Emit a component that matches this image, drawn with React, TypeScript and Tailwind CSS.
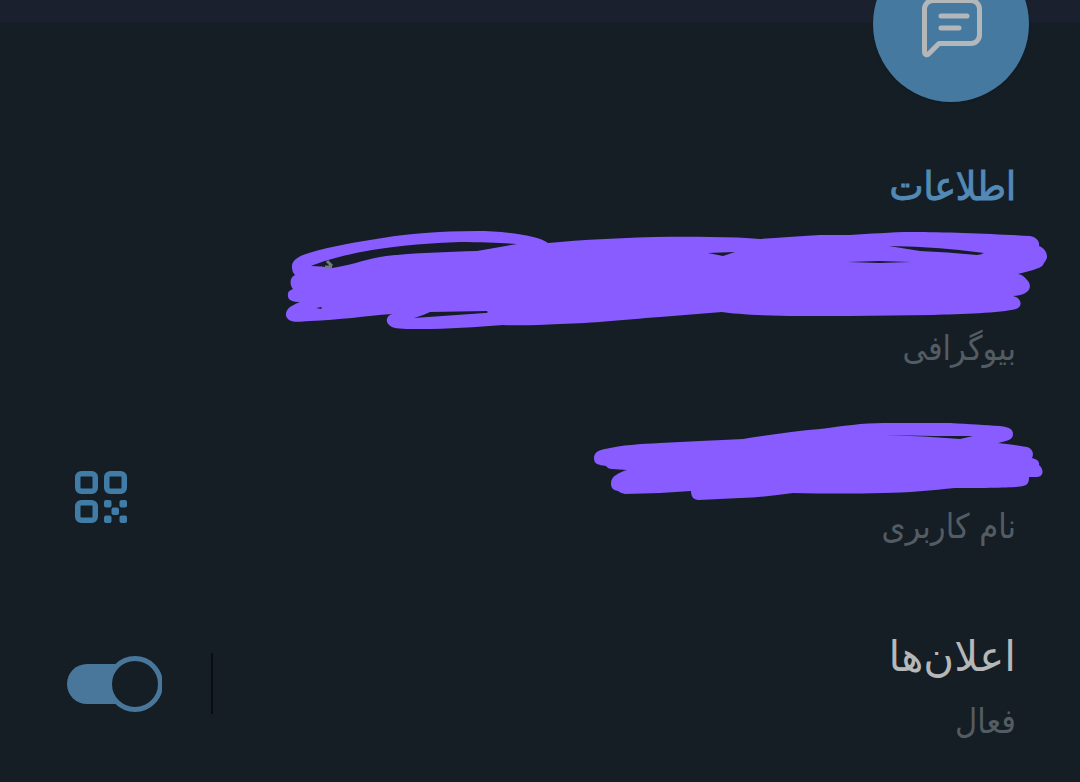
import { useState } from "react";

function MessageIcon() {
  return (
    <svg viewBox="0 0 72 72" className="size-[72px]" fill="none" stroke="#b3b7ba" strokeWidth="5" strokeLinecap="round" strokeLinejoin="round" aria-hidden="true">
      <path d="M9.500 21a8.500 8.500 0 0 1 8.500-8.500h38a8.500 8.500 0 0 1 8.500 8.500v26a8.500 8.500 0 0 1-8.500 8.500H24L13.500 66c-2 1.500-4 .5-4-2Z" />
      <path d="M26 28h26M26 40h18" />
    </svg>
  );
}

function QrIcon() {
  return (
    <svg viewBox="0 0 52 52" className="size-[52px]" fill="none" stroke="#407ca6" strokeWidth="5.500" aria-hidden="true">
      <rect x="2.750" y="2.750" width="17.500" height="17.500" rx="3.500" />
      <rect x="31.750" y="2.750" width="17.500" height="17.500" rx="3.500" />
      <rect x="2.750" y="31.750" width="17.500" height="17.500" rx="3.500" />
      <g fill="#407ca6" stroke="none">
        <rect x="29" y="29" width="7.500" height="7.500" rx="2" />
        <rect x="44.500" y="29" width="7.500" height="7.500" rx="2" />
        <rect x="36.500" y="36.500" width="7.500" height="7.500" rx="2" />
        <rect x="29" y="44.500" width="7.500" height="7.500" rx="2" />
        <rect x="44.500" y="44.500" width="7.500" height="7.500" rx="2" />
      </g>
    </svg>
  );
}

function BioScribble() {
  return (
    <svg viewBox="284 227 764 104" className="h-[104px] w-[764px] max-w-full" aria-hidden="true">
      <path
        fill="#885cff"
        d="M292 267C291 261 296 257 303 254C323 247 345 243 370 239C402 233 440 230 477 230C502 230 538 234 548 242L560 241C605 237 665 235 710 236Q740 236 760 238Q785 236 820 234L850 234C870 233 890 231 913 231C945 231 995 233 1030 235C1036 236 1040 240 1039 245C1044 247 1047 251 1047 256C1047 259 1044 261 1043 264C1040 268 1028 270 1018 273C1024 274 1026 278 1028 280C1033 287 1028 294 1013 295C1022 297 1023 306 1016 308C1001 312 960 313 933 314L850 315L800 315C765 315 735 313 722 311L660 316C620 319 595 322 560 323Q525 325 503 324C475 326 449 328 420 328C407 328 397 328 392 326C384 322 386 315 392 313C365 315 340 319 310 320C295 321 289 322 286 315C285 307 293 304 300 301C292 301 287 299 288 293C288 290 291 289 293 288C289 283 290 276 295 274Q292 271 292 267Z"
      />
      <g fill="#171c29">
        <path d="M311 265C325 259 353 252 372 249C405 244 430 242 460 241C484 241 502 242 517 243L477 250C445 251 405 252 380 256C363 259 348 265 332 267Q322 265 311 265Z" />
        <path d="M414 317Q424 314 430 311L487 310Q489 312 485 312Z" />
        <path d="M708 252L735 251L723 255Z" />
        <path d="M889 245Q943 246 984 252Q980 254 977 254Q947 251 920 250Z" />
        <path d="M848 261L879 260L911 261L879 262Z" />
        <path d="M316 307L322 306L321 308Z" />
      </g>
      <path d="M327 260L332 265M325 266H332" stroke="#707a80" strokeWidth="3" fill="none" />
    </svg>
  );
}

function UsernameScribble() {
  return (
    <svg viewBox="592 420 456 84" className="h-[84px] w-[456px] max-w-full" aria-hidden="true">
      <path
        fill="#885cff"
        d="M594 458C594 453 598 450 605 449C622 445 640 444 660 443L700 441Q723 440 743 439C768 435 795 431 820 429C843 426 863 423 883 423L950 423C970 424 985 425 1000 426C1009 427 1013 429 1013 434C1013 440 1007 441 998 443Q1017 445 1027 447C1033 449 1034 454 1032 458C1037 459 1040 462 1039 465C1044 469 1044 477 1037 477L1029 477C1029 482 1028 485 1023 486C1015 488 980 488 955 488C933 490 907 493 883 493Q840 494 793 493C775 495 758 498 740 498L699 500C693 500 691 496 691 491L660 493L625 494Q620 493 618 491C612 490 611 487 611 483C611 476 620 472 627 470L612 469Q608 469 606 466C598 465 594 464 594 458Z"
      />
      <path fill="#171c29" d="M885 435L933 436L973 436L960 439Q925 436 885 435Z" />
    </svg>
  );
}

export default function App() {
  const [enabled, setEnabled] = useState(true);

  return (
    <main dir="rtl" lang="fa" className="relative min-h-screen overflow-hidden bg-[#151e25] pb-8 font-['DejaVu_Sans_Condensed','DejaVu_Sans',sans-serif]">
      <header className="h-6 border-b-2 border-[#161e29] bg-[#1a202d]" />
      <button
        type="button"
        aria-label="ارسال پیام"
        className="absolute -top-[54px] right-[51px] flex size-[156px] items-center justify-center rounded-full bg-[#4579a0] shadow"
      >
        <MessageIcon />
      </button>

      <section className="pt-[138px]">
        <h2 className="px-16 text-[40px] leading-[48px] text-[#5289b5] [-webkit-text-stroke:1px]">اطلاعات</h2>
        <div className="mt-[18px] pr-8">
          <BioScribble />
          <p className="pr-8 text-[34px] leading-8 text-[#545c63]">بیوگرافی</p>
        </div>
        <div className="mt-14 flex items-end justify-between pr-8 pl-[75px]">
          <div className="min-w-0">
            <UsernameScribble />
            <p className="mt-0.5 pr-8 text-[34px] leading-10 text-[#545c63]">نام کاربری</p>
          </div>
          <button type="button" aria-label="کد QR" className="mb-[23px] shrink-0">
            <QrIcon />
          </button>
        </div>
      </section>

      <section className="mt-[87px] flex items-start justify-between pr-16 pl-[67px]">
        <label htmlFor="notifications">
          <span className="block font-['DejaVu_Sans',sans-serif] text-[42px] leading-[48px] text-[#b5b7b9]">اعلان‌ها</span>
          <span className="mt-5 block text-[34px] leading-10 text-[#545c63]">فعال</span>
        </label>
        <div className="flex items-center gap-[49px] pt-5">
          <span className="h-[61px] w-0.5 bg-[#080d14]" />
          <span className="relative flex h-14 w-[95px] items-center overflow-hidden" dir="ltr">
            <input
              id="notifications"
              type="checkbox"
              role="switch"
              checked={enabled}
              onChange={(e) => setEnabled(e.target.checked)}
              className="peer h-10 w-20 appearance-none rounded-full bg-[#48779b]"
            />
            <span className="pointer-events-none absolute left-0 size-14 rounded-full border-5 border-[#48779b] bg-[#151e25] peer-checked:left-10" />
          </span>
        </div>
      </section>
    </main>
  );
}
